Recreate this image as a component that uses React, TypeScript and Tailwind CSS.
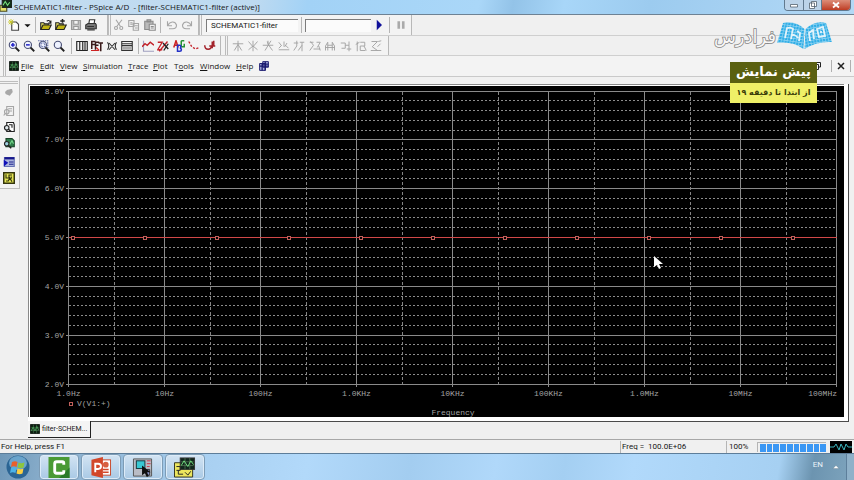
import React from "react";

type Kids = { children?: React.ReactNode };

function Icon({ children, size = "h-[13px] w-[13px]" }: Kids & { size?: string }) {
  return (
    <svg viewBox="0 0 16 16" className={`${size} shrink-0`} fill="none" stroke="#222" strokeWidth="1.5" aria-hidden="true">
      {children}
    </svg>
  );
}

function Tool({ label, children, disabled }: Kids & { label: string; disabled?: boolean }) {
  return (
    <button type="button" aria-label={label} disabled={disabled} className="flex h-4 w-[15px] shrink-0 items-center justify-center">
      <Icon size="h-3 w-3">{children}</Icon>
    </button>
  );
}

function Sep() {
  return <div className="h-4 w-px shrink-0 bg-[#b5b5b5]" />;
}

function Grip() {
  return (
    <div className="flex h-full shrink-0 gap-px">
      <div className="w-px bg-[#bcbcbc]" />
      <div className="w-px bg-[#bcbcbc]" />
    </div>
  );
}

const G = "#a6a6a6";

function Lens({ children }: Kids) {
  return (
    <>
      <circle cx="6.5" cy="6.5" r="4.8" stroke="#4a5076" fill="#eef2ff" />
      <path d="M10 10l5 5" stroke="#222" strokeWidth="2.4" />
      {children}
    </>
  );
}

function Folder({ arrow }: { arrow?: boolean }) {
  return (
    <>
      <path d="M1 14V5h4l1 1.500h5V9" stroke="#222" fill="#f4ee6c" />
      <path d="M1 14l3-6h11l-3 6z" stroke="#222" fill="#c0b414" />
      {arrow ? <path d="M7 2.500h6M10 0v5" stroke="#222" strokeWidth="2" /> : <path d="M9 3c2-2 4-1 5 2M14.500 2v3.500H11" stroke="#222" />}
    </>
  );
}

function ScopeArt() {
  return (
    <>
      <rect x="1" y="1" width="14" height="14" fill="#0d2212" stroke="#0b140d" />
      <path d="M1 6h14M1 10.500h14M5.500 1v14M10.500 1v14" stroke="#55815a" strokeWidth=".8" />
      <path d="M2 11l3-6 3 6 3-7 3 6" stroke="#4aa65a" strokeWidth="1.300" />
    </>
  );
}

const cursorTools: [string, string][] = [
  ["Toggle cursor", "M1 5h14M8 1v14M8 6l-5 8M8 6l5 8"],
  ["Cursor peak", "M2 2l6 7 6-7M8 1v14M2 13l6-5 6 5"],
  ["Cursor trough", "M1 7h14M12 1L4 14M7 2l2 5 5 7M8 1v5"],
  ["Cursor slope", "M1 3l4 5M8 2v7M12 4l-3 5M1 13h14M10 7l4 4M4 8l-3 3"],
  ["Cursor minimum", "M1 4h6M5 1v7l-4 6M9 3h6M12 3v12M7 14l5-7"],
  ["Cursor maximum", "M1 3h5M2 2l4 5-5 7M6 12h9M10 3h5l-4 7M13 8l2 6"],
  ["Cursor point", "M2 14V8l3-5v11M11 14V3l3 5v6M5 7h6M2 10h12"],
  ["Cursor search", "M1 4h6v7H2M7 7h5V2M12 7v8M9 12h6"],
  ["Cursor next transition", "M3 2v13M1 6l5-3M7 3h6v5H7v6h7M12 8l3 6"],
  ["Mark label", "M2 2h8l-7 7 7 5M11 2l4-1M10 9l4-4M1 14h14"],
];

function Toolbars() {
  return (
    <div className="flex shrink-0 flex-col">
      <div className="flex h-[21px] border-b border-[#cfcfcf]">
        <div className="flex items-center border-r border-[#b8b8b8] bg-[#f3f3f3] pl-[3px] pr-2">
          <Grip />
          <Tool label="New">
            <path d="M5 4h6l3 3v8H5z" fill="#fff" stroke="#444" />
            <path d="M4 0v8M0 4h8M1 1l6 6M7 1L1 7" stroke="#c8c82a" strokeWidth="1.200" />
          </Tool>
          <button type="button" aria-label="New options" className="flex h-4 w-3 items-center justify-center">
            <Icon size="h-[7px] w-[7px]"><path d="M1 5h14l-7 7z" fill="#111" stroke="none" /></Icon>
          </button>
          <div className="px-0.5"><Sep /></div>
          <div className="flex w-[61px] items-center justify-between">
            <Tool label="Open"><Folder /></Tool>
            <Tool label="Append file"><Folder arrow /></Tool>
            <Tool label="Save" disabled>
              <path d="M2 2h12v12H2z" stroke="#999" fill="#c4c4c4" /><path d="M5 2h6v5H5zM5 10h6v4H5z" fill="#f3f3f3" stroke="#999" />
            </Tool>
            <Tool label="Print">
              <path d="M5 7l1-6h7l-1 6" fill="#fff" stroke="#333" /><path d="M1 8l3-2h10l1 2v5H1z" fill="#777" stroke="#333" /><path d="M3 14.500h10M3 10h9" stroke="#333" />
            </Tool>
          </div>
        </div>
        <div className="flex items-center border-r border-[#b8b8b8] bg-[#f3f3f3] pr-1">
          <Grip />
          <div className="flex w-[46px] items-center justify-between">
            <Tool label="Cut" disabled><path d="M4 1l6 9M12 1L5 10" stroke={G} /><circle cx="4" cy="12" r="2" stroke={G} /><circle cx="11" cy="12" r="2" stroke={G} /></Tool>
            <Tool label="Copy" disabled><path d="M1 2h7v8H1zM7 6h7v9H7zM3 5h3M3 7h3M9 9h4M9 12h4" stroke={G} /></Tool>
            <Tool label="Paste" disabled><path d="M1 3h11v11H1zM4 1h5v3H4z" stroke="#8c8c8c" fill="#bbb" /><path d="M7 7h8v8H7zM9 10h4M9 12h4" stroke="#8c8c8c" fill="#eee" /></Tool>
          </div>
          <div className="px-[3px]"><Sep /></div>
          <Tool label="Undo" disabled><path d="M2 3v6h6M2 9c3-6 10-7 12-1 0 3-2 5-5 5H4" stroke={G} /></Tool>
          <Tool label="Redo" disabled><path d="M14 3v6H8M14 9C11 3 4 2 2 8c0 3 2 5 5 5h5" stroke={G} /></Tool>
        </div>
        <div className="flex items-center border-r border-[#b8b8b8] bg-[#f3f3f3] pr-[3px]">
          <Grip />
          <input aria-label="Simulation profile" defaultValue="SCHEMATIC1-filter" className="ml-1 h-[13px] w-[92px] border-l border-t border-[#7c7c7c] bg-[#fbfbfb] pl-1 text-[8px] leading-3 outline-none" />
          <div className="px-[3px]"><Sep /></div>
          <input aria-label="Trace expression" defaultValue="" className="h-[13px] w-[66px] border-l border-t border-[#7c7c7c] bg-[#fbfbfb] px-1 text-[8px] outline-none" />
          <Tool label="Run"><path d="M5 1l7 7-7 7z" fill="#10109a" stroke="none" /></Tool>
          <div className="px-[3px]"><Sep /></div>
          <Tool label="Pause" disabled><path d="M5 3v10M11 3v10" stroke="#aaa" strokeWidth="3.500" /></Tool>
        </div>
      </div>

      <div className="flex h-5 items-stretch border-b border-[#cfcfcf]">
        <div className="flex w-[221px] items-center border-r border-[#b8b8b8] bg-[#f3f3f3] pl-[3px]">
          <Grip />
          <div className="flex w-[61px] items-center justify-between">
            <Tool label="Zoom in"><Lens><path d="M4 6.500h5M6.500 4v5" stroke="#2222c8" strokeWidth="2" /></Lens></Tool>
            <Tool label="Zoom out"><Lens><path d="M4 6.500h5" stroke="#2222c8" strokeWidth="2" /></Lens></Tool>
            <Tool label="Zoom area"><Lens><path d="M4 4h5v5H4zM0 1h13v11" stroke="#6670a8" strokeDasharray="2 1" /></Lens></Tool>
            <Tool label="Zoom fit"><Lens /></Tool>
          </div>
          <div className="pl-1 pr-0.5"><Sep /></div>
          <div className="flex w-[61px] items-center justify-between">
            <Tool label="Log X axis"><path d="M1 2h14v12H1zM5 2v12M9 2v12M12 2v12" stroke="#222" /></Tool>
            <Tool label="Fourier">
              <path d="M1 12V2h5M1 6h4M6 13V3h5M6 7h4M10 4h6M13 4v11" stroke="#3a1a1a" strokeWidth="2" /><path d="M0 14h10M7 10l4 4" stroke="#c22" />
            </Tool>
            <Tool label="Performance analysis"><path d="M2 3c2 3 2 7 0 10M14 3c-2 3-2 7 0 10M4 4l8 9M12 4L4 13" stroke="#333" /></Tool>
            <Tool label="Log Y axis"><path d="M1 2h14v12H1zM1 5h14M1 7.500h14" stroke="#333" /><path d="M2 9h12v4H2z" fill="#aaa" stroke="none" /></Tool>
          </div>
          <div className="pl-[3px] pr-px"><Sep /></div>
          <div className="flex w-[77px] items-center justify-between">
            <Tool label="Add trace"><path d="M2 1v14h14" stroke="#a0a0c0" /><path d="M0 9l4-4 3 2 4-4 5 4" stroke="#c3222a" strokeWidth="2" /></Tool>
            <Tool label="Evaluate goal function"><path d="M1 3h6l-6 10h6M14 2L3 15" stroke="#c3222a" strokeWidth="1.800" /><path d="M8 4l7 8M15 5l-6 9" stroke="#222" strokeWidth="1.800" /></Tool>
            <Tool label="Text label"><path d="M1 10l3-9 3 9M2 7h4" stroke="#c22" strokeWidth="2" /><path d="M11 1h4M11 1v8h4V5" stroke="#269336" strokeWidth="2" /><path d="M6 7v8h3c3 0 3-4 0-4 2 0 2-4 0-4z" stroke="#2432c8" strokeWidth="2" /></Tool>
            <Tool label="Mark data points"><path d="M1 2l4 7 5 3 5-2" stroke="#c3222a" strokeWidth="1.800" strokeDasharray="3 2" /></Tool>
            <Tool label="Toggle cursor"><path d="M1 7c0 7 9 7 9 0M7 8h8M11 2v9M13 1v6" stroke="#a3222a" strokeWidth="2" /></Tool>
          </div>
        </div>
        <div className="flex w-[168px] items-center border-r border-[#b8b8b8] bg-[#f3f3f3] pl-1">
          <Grip />
          <div className="ml-0.5 flex w-[154px] items-center justify-between">
            {cursorTools.map(([label, d]) => (
              <Tool key={label} label={label} disabled><path d={d} stroke="#a0a0a0" strokeWidth="1.200" /></Tool>
            ))}
          </div>
        </div>
      </div>
    </div>
  );
}

const menus: [string, string, string, string][] = [
  ["", "F", "ile", "w-[19px]"],
  ["", "E", "dit", "w-5"],
  ["", "V", "iew", "w-[23px]"],
  ["", "S", "imulation", "w-[45px]"],
  ["", "T", "race", "w-[25px]"],
  ["", "P", "lot", "w-[21px]"],
  ["T", "o", "ols", "w-[26px]"],
  ["", "W", "indow", "w-9"],
  ["", "H", "elp", "w-[23px]"],
];

function MenuBar() {
  return (
    <nav aria-label="Menu" className="flex h-[21px] shrink-0 items-center border-b border-[#c9c9c9] bg-[#f3f3f3] pl-[3px]">
      <Grip />
      <div className="pl-[3px] pr-0.5"><Icon size="h-[10px] w-[10px]"><ScopeArt /></Icon></div>
      {menus.map(([a, u, b, w]) => (
        <button key={u + b} type="button" className={`${w} whitespace-nowrap text-left font-['Open_Sans','Noto_Sans',sans-serif] text-[8px] leading-3`}>
          {a}<u>{u}</u>{b}
        </button>
      ))}
      <Icon size="h-[10px] w-[10px]">
        <path d="M1 4h9v11H1zM6 1h9v9H6z" fill="#a9b0de" stroke="#18186e" /><path d="M1 8h14M5 4v11M10 1v14M6 5h9" stroke="#18186e" strokeWidth="2" />
      </Icon>
      <button type="button" aria-label="Restore document" className="ml-auto flex h-3 w-3 items-center justify-center">
        <Icon size="h-2 w-2"><path d="M5 5V1h10v9h-4M1 5h10v10H1z" strokeWidth="2" /></Icon>
      </button>
      <button type="button" aria-label="Close document" className="ml-2 mr-[3px] flex h-3 w-5 items-center justify-center border-l border-r border-[#b0b0b0]">
        <Icon size="h-2 w-2"><path d="M2 2l12 12M14 2L2 14" strokeWidth="3" /></Icon>
      </button>
    </nav>
  );
}

function SideTools() {
  return (
    <div className="flex h-[112px] w-5 shrink-0 flex-col items-center border-b border-r border-[#bdbdbd] bg-[#f3f3f3] pr-px">
      <div className="mt-1 h-[3px] w-full border-y border-[#bdbdbd]" />
      <div className="flex flex-col items-center">
        <Tool label="Stop" disabled><path d="M4 11c-4-4 3-7 8-7l1 4-4 5z" fill="#a8a8a8" stroke="none" /></Tool>
        <div className="h-[3px]" />
        <Tool label="View netlist" disabled><path d="M5 2h9v12H5zM7 5h5M7 8h5" stroke={G} /><circle cx="5" cy="9" r="3" stroke={G} /><path d="M3 11l-2 3" stroke={G} /></Tool>
        <Tool label="View output file"><path d="M5 2h9l1 3v9H5z" fill="#fff" /><path d="M8 5h4v4" /><circle cx="5" cy="9" r="3" fill="#dfe8ec" /><path d="M7 11l4 3" strokeWidth="2" /></Tool>
        <Tool label="View results"><path d="M4 2h8l3 3v8H4z" fill="#2f7c49" stroke="#194328" /><path d="M6 6l3 4 3-5 2 4" stroke="#74d58a" /><circle cx="5" cy="9" r="3" fill="#9fd0e0" /><path d="M7 11l4 4" strokeWidth="2" /></Tool>
        <div className="h-[3px]" />
        <Tool label="Simulation queue"><path d="M2 2h13v12H2z" fill="#a9b3dc" stroke="#6874b4" /><path d="M2 3h13" stroke="#17178c" strokeWidth="3" /><path d="M1 5l6 4-6 5z" fill="#1010b8" stroke="none" /><path d="M8 8h6M8 11h6" stroke="#22268e" /></Tool>
        <Tool label="Schematic"><path d="M1 1h14v14H1z" fill="#e5e655" stroke="#34350e" strokeWidth="2" /><path d="M4 3v5h4V4h4M4 12h3l2-4 3 5M11 6v3" stroke="#34350e" /></Tool>
      </div>
    </div>
  );
}

const voltages = ["8.0V", "7.0V", "6.0V", "5.0V", "4.0V", "3.0V", "2.0V"];
const frequencies = ["1.0Hz", "10Hz", "100Hz", "1.0KHz", "10KHz", "100KHz", "1.0MHz", "10MHz", "100MHz"];
const markers = Array.from({ length: 11 }, (_, i) => 42.5 + i * 72);
const traceRow = 3;

const yFor = (i: number) => Math.floor(5 + (i * 293) / 6) + 0.5;
const xFor = (i: number) => 38.5 + i * 96;

function Plot() {
  const minor: number[] = [];
  for (let i = 0; i < 6; i++) for (let j = 1; j < 5; j++) minor.push(yFor(i + j / 5));
  return (
    <svg viewBox="0 0 814 331" role="img" aria-label="V(V1:+) against frequency" className="block h-full w-full bg-black font-['Liberation_Mono',monospace] text-[8px]">
      <g stroke="#8c8c8c" strokeDasharray="2 2">
        {minor.map((y) => <path key={y} d={`M39 ${y}H806`} />)}
      </g>
      <g stroke="#858585" strokeDasharray="3 2">
        {frequencies.slice(1).map((f, i) => <path key={f} d={`M${xFor(i) + 46} 6V298`} />)}
      </g>
      <g stroke="#8a8a8a">
        {voltages.map((v, i) => <path key={v} d={`M36 ${yFor(i)}H${i === traceRow ? 39 : 807}`} />)}
        {frequencies.map((f, i) => <path key={f} d={`M${xFor(i)} 5V301`} />)}
      </g>
      <rect x="39" y={yFor(traceRow) - 0.5} width="768" height="1" fill="#d24848" />
      <g fill="#000" stroke="#c0605c">
        {markers.map((x) => <rect key={x} x={x - 1} y={yFor(traceRow) - 1} width="3" height="3" />)}
        <rect x="39.500" y="316.500" width="3" height="3" />
      </g>
      <g fill="#a3a3a3">
        {voltages.map((v, i) => <text key={v} x="34" y={yFor(i) + 2.5} textAnchor="end">{v}</text>)}
        {frequencies.map((f, i) => (
          <text key={f} x={i === 8 ? 807 : xFor(i)} y="310" textAnchor={i === 8 ? "end" : "middle"}>{f}</text>
        ))}
        <text x="47" y="320">V(V1:+)</text>
        <text x="423" y="329" textAnchor="middle">Frequency</text>
      </g>
      <path d="M624 170v11l3-2 2 4 2-1-2-4h4z" fill="#fff" />
    </svg>
  );
}

function Watermark() {
  return (
    <div className="pointer-events-none absolute right-[22px] top-[21px] flex items-start gap-[3px]">
      <svg viewBox="0 0 60 34" className="h-[34px] w-[60px] overflow-visible" role="img" aria-label="فرادرس">
        <text x="31" y="22" textAnchor="middle" direction="rtl" fontSize="18" fill="#f7f7f7" stroke="#858585" strokeWidth="1.600" paintOrder="stroke" className="font-['DejaVu_Sans',sans-serif]">فرادرس</text>
      </svg>
      <svg viewBox="0 0 55 30" className="h-[30px] w-[55px]" aria-hidden="true">
        <defs>
          <pattern id="leftWeave" width="3" height="3" patternUnits="userSpaceOnUse" patternTransform="skewX(-12) skewY(8)">
            <rect width="3" height="3" fill="#8fd3f2" /><rect width="2.300" height="2.300" fill="#31aee6" />
          </pattern>
          <pattern id="rightWeave" width="3" height="3" patternUnits="userSpaceOnUse" patternTransform="skewX(12) skewY(-8)">
            <rect width="3" height="3" fill="#8fd3f2" /><rect width="2.300" height="2.300" fill="#31aee6" />
          </pattern>
        </defs>
        <path d="M6 2Q18-1 27.500 8L26.500 28Q15 20 0 22z" fill="url(#leftWeave)" />
        <path d="M49 2Q38-1 28.500 8L27.500 28Q40 20 55 21z" fill="url(#rightWeave)" />
        <path d="M8 17l2-10q4-1 6 1l-1 4M14 18l1-5q4 1 6 4M20 10l3 2-1 8" fill="none" stroke="#e3f3fa" strokeWidth="1.800" />
        <path d="M33 20l-1-8 4-3 1 9M40 8l6-2 2 9-6 1zM44 10v2" fill="none" stroke="#e3f3fa" strokeWidth="1.800" />
      </svg>
    </div>
  );
}

function PreviewBadge() {
  return (
    <div dir="rtl" className="absolute right-[37px] top-[62px] w-[87px] text-center font-['DejaVu_Sans',sans-serif] font-bold">
      <div className="h-[21px] whitespace-nowrap bg-[#5a6010] text-[13px] leading-5 text-white">پیش نمایش</div>
      <div className="h-5 whitespace-nowrap bg-[#eff067] text-[8px] leading-5 text-[#3b3d08]">از ابتدا تا دقیقه ۱۹</div>
    </div>
  );
}

function TaskButton({ label, children }: Kids & { label: string }) {
  return (
    <button type="button" aria-label={label} className="flex h-[26px] w-10 items-center justify-center rounded-sm border border-[#7d9cb6] bg-linear-to-b from-[#d3e4f3] to-[#a9c9e5] shadow-[inset_0_0_0_1px_#dcebf8]">
      {children}
    </button>
  );
}

export default function App() {
  return (
    <div className="relative flex h-screen min-h-[400px] w-full flex-col overflow-hidden bg-[#f0f0f0] font-['Roboto',sans-serif] text-[#151515]">
      <header className="flex h-[15px] shrink-0 items-start border-b border-[#6e8294] bg-[linear-gradient(100deg,#c4dcf0_0%,#bddaf1_30%,#a2d2f6_36%,#aad7f8_56%,#93c3e8_60%,#a8d6f8_66%,#9ccbef_76%,#b3d9f6_100%)]">
        <Icon size="h-3 w-3"><path d="M0 7h9v8H0z" fill="#e8e36c" stroke="#4a4920" /><path d="M3 0h13v10H3z" fill="#12301a" stroke="#222" /><path d="M4 7l3-5 3 5 3-4" stroke="#79e07e" /></Icon>
        <h1 className="ml-0.5 whitespace-pre font-['Open_Sans','Noto_Sans',sans-serif] text-[8px] leading-[14px]">SCHEMATIC1-filter - PSpice A/D  - [filter-SCHEMATIC1-filter (active)]</h1>
        <div className="ml-auto mr-[3px] flex h-[11px] overflow-hidden rounded-b-sm border border-t-0 border-[#61798e]">
          <button type="button" aria-label="Minimize" className="flex w-[19px] items-center justify-center border-r border-[#61798e] bg-[#bcd3e8]"><Icon size="h-2 w-2"><path d="M1 7h14v5H1z" fill="#fff" stroke="#4c5a66" /></Icon></button>
          <button type="button" aria-label="Restore" className="flex w-[18px] items-center justify-center border-r border-[#61798e] bg-[#bcd3e8]"><Icon size="h-2 w-2"><path d="M5 1h10v10H5zM1 4h10v11H1z" fill="#fff" stroke="#4c5a66" /></Icon></button>
          <button type="button" aria-label="Close" className="flex w-7 items-center justify-center bg-linear-to-b from-[#dc8c78] to-[#bd3b22]"><Icon size="h-2 w-2"><path d="M2 3l12 10M14 3L2 13" stroke="#fff" strokeWidth="3.500" /></Icon></button>
        </div>
      </header>

      <Toolbars />
      <MenuBar />

      <main className="flex min-h-0 flex-1">
        <SideTools />
        <div className="flex min-w-0 flex-1 flex-col pl-2 pr-[5px] pt-[7px]">
          <div className="min-h-0 flex-1 border-b border-r border-[#4b4b4b] bg-white pb-1 pr-1">
            <div className="h-full border-l border-t border-[#888] pl-px pt-px"><Plot /></div>
          </div>
          <div className="flex h-[17px] shrink-0">
            <button type="button" className="-mt-px flex h-[17px] w-[63px] items-center gap-0.5 whitespace-nowrap border-b border-r border-[#222] bg-[#f4f4f4] pl-0.5 text-[7px]">
              <Icon size="h-[10px] w-[10px]"><ScopeArt /></Icon>filter-SCHEM...
            </button>
          </div>
        </div>
      </main>

      <footer className="flex h-[14px] shrink-0 items-center border-t border-[#a8a8a8] bg-[#f0f0f0] text-[8px] leading-3">
        <span className="flex-1 pl-px">For Help, press F1</span>
        <span className="w-[106px] whitespace-pre border-l border-[#b5b5b5] pl-px">Freq =  100.0E+06</span>
        <span className="w-[31px] border-l border-[#b5b5b5] pl-0.5">100%</span>
        <div role="progressbar" aria-label="Simulation progress" aria-valuenow={100} className="mr-1 flex h-[10px] w-[69px] gap-px border-l border-t border-[#b5b5b5] pl-0.5 pt-px">
          {Array.from({ length: 10 }, (_, i) => <div key={i} className="h-2 flex-1 bg-[#3a97f4]" />)}
        </div>
        <svg viewBox="0 0 22 12" className="mr-0.5 h-3 w-[22px] bg-black" fill="none" stroke="#3bb4bc" aria-hidden="true"><path d="M0 6h4l2-3 3 6 2-6 3 6 2-6 2 3h4" /></svg>
      </footer>

      <div className="flex h-[27px] shrink-0 items-center border-t border-[#5d7d99] bg-[linear-gradient(100deg,#6f98b9_0%,#86abc9_5%,#a9d0f1_24%,#b2d9fa_36%,#a3cdf0_48%,#b0d8fa_58%,#a4cff2_66%,#b1d9fb_74%,#a6d0f2_91%,#6c94b0_95%,#7fa5be_100%)]">
        <button type="button" aria-label="Start" className="flex h-[26px] w-[39px] items-center justify-center pr-1">
          <svg viewBox="0 0 24 24" className="h-6 w-6" aria-hidden="true">
            <circle cx="12" cy="12" r="11.500" fill="#2b6594" /><ellipse cx="12" cy="8" rx="9" ry="7" fill="#6aa4cc" />
            <path d="M6 7c2-1 4-1 5.500 0l-1 5c-2-1-3.500-1-5.500 0z" fill="#e8602c" /><path d="M12.500 7.500c2 1 3.500 1 6 0l-1 5c-2 1-4 1-6 0z" fill="#8cc63f" />
            <path d="M5 13c2-1 3.500-1 5.500 0l-1 5c-2-1-3.500-1-5.500 0z" fill="#4cb3e8" /><path d="M11.500 13.500c2 1 4 1 6 0l-1 5c-2 1-4 1-6 0z" fill="#fbd043" />
          </svg>
        </button>
        <div className="flex gap-0.5">
          <TaskButton label="Camtasia">
            <svg viewBox="0 0 22 22" className="h-[21px] w-[22px]" aria-hidden="true"><rect x="0" y="0" width="22" height="22" fill="#4a9a35" /><path d="M11 22L22 11v11z" fill="#2b7a29" /><path d="M16 8V6.500Q16 5 14.500 5H8.500Q6.500 5 6.500 7v8q0 2 2 2h6q1.500 0 1.500-1.500V14" fill="none" stroke="#fff" strokeWidth="3" /></svg>
          </TaskButton>
          <TaskButton label="PowerPoint">
            <svg viewBox="0 0 22 22" className="h-[21px] w-[22px]" aria-hidden="true"><rect x="9" y="3" width="12" height="16" fill="#fff" stroke="#c9482a" /><circle cx="16" cy="8" r="3" fill="#d85f40" /><path d="M13 13h6M13 16h6" stroke="#d2472a" strokeWidth="1.500" /><path d="M1 3l12-3v22L1 19z" fill="#d2472a" /><path d="M5 16V7h3q3 0 3 2.700T8 12.500H5" fill="none" stroke="#fff" strokeWidth="2" /></svg>
          </TaskButton>
          <TaskButton label="Capture">
            <svg viewBox="0 0 22 22" className="h-[21px] w-[22px]" aria-hidden="true"><path d="M1 2h19v18H1z" fill="#b9bcc5" stroke="#555" /><rect x="4" y="4" width="9" height="8" fill="#39c8d3" stroke="#14343a" /><path d="M15 4h4M15 7h4M15 10h3" stroke="#ca3a4a" /><path d="M15 13h3v6h-3z" fill="#8d94cf" stroke="#333" /><path d="M10 9v10l3-2 2 4 2-1-2-4h4z" fill="#111" /></svg>
          </TaskButton>
          <TaskButton label="PSpice">
            <svg viewBox="0 0 24 22" className="h-[21px] w-6" aria-hidden="true"><path d="M1 6h10v6h9v9H1z" fill="#ece65e" stroke="#33331c" /><rect x="7" y="1" width="15" height="12" fill="#10261c" stroke="#333" /><path d="M8 5h13M8 9h13M12 1v12M17 1v12" stroke="#47674c" /><path d="M8 9l3-5 4 6 3-6 3 4" fill="none" stroke="#70dd7e" /><path d="M3 10h4v4H3M5 14v4h5M12 16l3 3 3-4" fill="none" stroke="#222" /></svg>
          </TaskButton>
        </div>
        <button type="button" className="ml-auto pb-1 text-[8px] text-[#eaf3fa]">EN</button>
        <button type="button" aria-label="Show hidden icons" className="ml-[7px] flex h-4 w-3 items-center justify-center"><Icon size="h-2 w-2"><path d="M2 11h12L8 5z" fill="#fff" stroke="#456" strokeWidth=".5" /></Icon></button>
        <div className="ml-1 h-full w-2 border-l border-[#5d7f9b] bg-[#8fb1c9]" />
      </div>

      <Watermark />
      <PreviewBadge />
    </div>
  );
}
